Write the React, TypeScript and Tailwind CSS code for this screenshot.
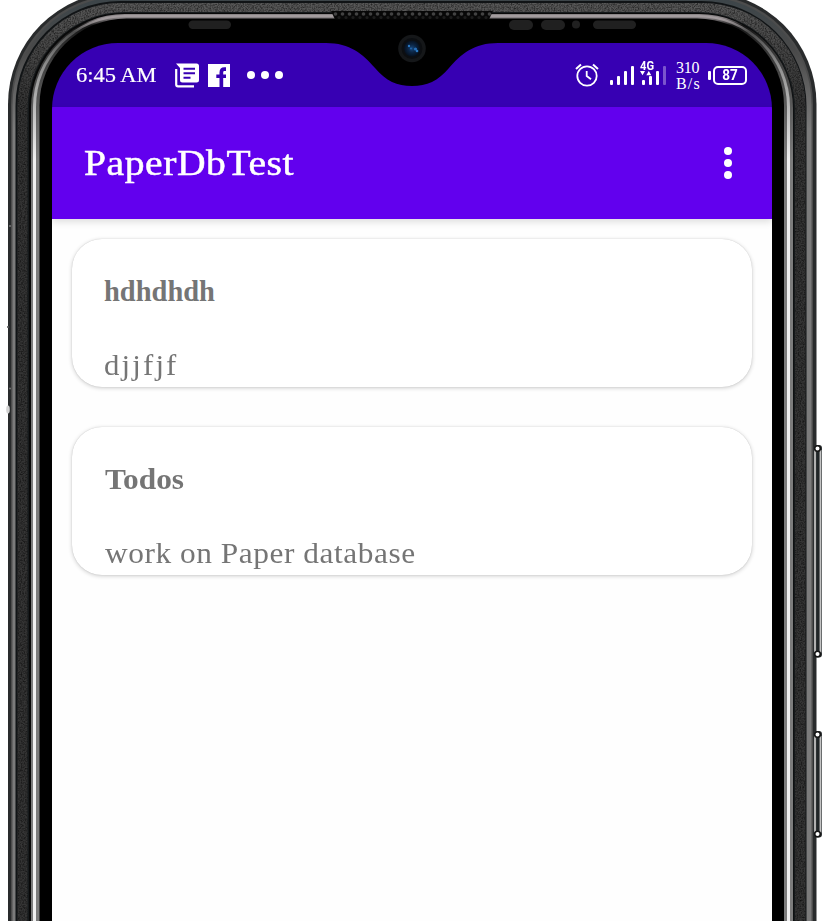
import React from "react";

function SideButton({ y, height }: { y: number; height: number }) {
  const end = y + height;
  return (
    <g>
      <rect x="813.5" y={y} width="8.5" height={height} rx="3" fill="#303436" />
      <rect x="814" y={y + 5} width="2.2" height={height - 10} fill="#b0b0b0" />
      <rect x="816.3" y={y + 3} width="3.2" height={height - 6} fill="#202527" />
      <rect x="819.6" y={y + 5} width="1.8" height={height - 10} fill="#c4c4c4" />
      <circle cx="817.5" cy={y + 3.5} r="2.8" fill="#fff" stroke="#151515" strokeWidth="1.6" />
      <circle cx="817.5" cy={end - 3.5} r="2.8" fill="#fff" stroke="#151515" strokeWidth="1.6" />
    </g>
  );
}

function PhoneFrame() {
  return (
    <svg className="absolute inset-0" width="824" height="921" viewBox="0 0 824 921" aria-hidden="true">
      <defs>
        <linearGradient id="rim" x1="0" y1="0" x2="0" y2="160" gradientUnits="userSpaceOnUse">
          <stop offset="0" stopColor="#a39c9e" />
          <stop offset="0.12" stopColor="#a39c9e" />
          <stop offset="0.2" stopColor="#4c4c4c" />
          <stop offset="0.4" stopColor="#8c8c8c" />
          <stop offset="1" stopColor="#f0f0f0" />
        </linearGradient>
        <linearGradient id="rimInner" x1="0" y1="0" x2="0" y2="160" gradientUnits="userSpaceOnUse">
          <stop offset="0.11" stopColor="#8a8587" />
          <stop offset="0.16" stopColor="#161616" />
          <stop offset="0.35" stopColor="#3c3c3c" />
          <stop offset="1" stopColor="#7c7c7c" />
        </linearGradient>
        <linearGradient id="metal" x1="0" y1="0" x2="0" y2="100" gradientUnits="userSpaceOnUse">
          <stop offset="0" stopColor="#5a5a5a" />
          <stop offset="1" stopColor="#353535" />
        </linearGradient>
        <linearGradient id="edge" x1="0" y1="0" x2="0" y2="130" gradientUnits="userSpaceOnUse">
          <stop offset="0" stopColor="#3d4549" />
          <stop offset="0.4" stopColor="#4a4a4a" />
          <stop offset="1" stopColor="#7b7b7b" />
        </linearGradient>
        <radialGradient id="lens">
          <stop offset="0" stopColor="#16477c" />
          <stop offset="0.5" stopColor="#0b2443" />
          <stop offset="1" stopColor="#06101d" />
        </radialGradient>
        <filter id="grain" x="0" y="0" width="824" height="921" filterUnits="userSpaceOnUse">
          <feTurbulence type="fractalNoise" baseFrequency="0.7" numOctaves="2" seed="4" />
          <feColorMatrix values="0 0 0 0 0  0 0 0 0 0  0 0 0 0 0  1.2 0 0 0 -0.42" />
          <feComposite in2="SourceGraphic" operator="in" />
        </filter>
        <pattern id="mesh" x="332" y="11" width="7" height="9" patternUnits="userSpaceOnUse">
          <rect width="7" height="9" fill="#080808" />
          <circle cx="3.5" cy="3" r="1.8" fill="#424242" />
          <circle cx="0" cy="6.5" r="1.5" fill="#1d1d1d" />
          <circle cx="7" cy="6.5" r="1.5" fill="#1d1d1d" />
        </pattern>
      </defs>
      <rect x="8" y="-8" width="808.5" height="1200" rx="112" fill="#292b2c" />
      <rect x="11" y="-5" width="802" height="1200" rx="109" fill="#4c4c4c" />
      <rect x="12.5" y="-3" width="799" height="1200" rx="108" fill="url(#edge)" />
      <rect x="15.5" y="1" width="791" height="1200" rx="105" fill="#111416" />
      <rect x="17.5" y="3" width="788" height="1200" rx="103" fill="url(#metal)" />
      <rect x="17.5" y="3" width="788" height="1200" rx="103" fill="#000" filter="url(#grain)" />
      <rect x="27.5" y="12" width="767.5" height="1200" rx="97" fill="#15191b" />
      <rect x="29" y="13" width="764.5" height="1200" rx="95" fill="#080808" />
      <rect x="31" y="14" width="762" height="1200" rx="94" fill="url(#rimInner)" />
      <rect x="33" y="15" width="757" height="1200" rx="92" fill="url(#rim)" />
      <rect x="36" y="17" width="751" height="1200" rx="90" fill="url(#rimInner)" />
      <rect x="39.5" y="18.5" width="744.5" height="1200" rx="87" fill="#000" />

      <path d="M331 11H493L489 19.5H335Z" fill="url(#mesh)" />
      <rect x="188.5" y="20.5" width="42.5" height="8.5" rx="4.2" fill="#202020" />
      <rect x="509" y="20" width="24" height="10" rx="5" fill="#202020" />
      <rect x="541" y="20" width="24" height="10" rx="5" fill="#202020" />
      <circle cx="576" cy="24.5" r="4" fill="#202020" />
      <rect x="593" y="20.5" width="43" height="8.5" rx="4.2" fill="#202020" />

      <ellipse cx="8" cy="409.5" rx="1.8" ry="4" fill="#d2d2d2" />
      <circle cx="10" cy="388.5" r="1" fill="#777" />
      <circle cx="10" cy="226" r="1" fill="#777" />
      <rect x="7" y="326" width="1.5" height="2" fill="#777" />
      <SideButton y={445} height={212.5} />
      <SideButton y={731} height={106.5} />
    </svg>
  );
}

function CameraNotch() {
  return (
    <svg className="absolute left-[270px] top-[-43px]" width="180" height="88" viewBox="322 0 180 88" aria-hidden="true">
      <path
        d="M326 42V43C350 43 363 54 375 68C386 81 397 86 412 86C427 86 438 81 449 68C461 54 474 43 498 43V42Z"
        fill="#000"
      />
      <circle cx="412" cy="48.5" r="13.8" fill="#151719" />
      <circle cx="412" cy="48.5" r="10.5" fill="#0c0e11" />
      <circle cx="412" cy="48.5" r="8" fill="url(#lens)" />
      <circle cx="409" cy="46" r="1.2" fill="#2c79c4" />
      <circle cx="415.5" cy="49" r="1.6" fill="#266eb8" />
      <circle cx="417" cy="51" r="1.3" fill="#2b79c2" />
      <circle cx="411" cy="48.5" r="1" fill="#2465ab" />
    </svg>
  );
}

function NewsIcon() {
  return (
    <svg width="24" height="25" viewBox="0 0 24 25" aria-hidden="true">
      <path d="M1.2 6V21.5Q1.2 23.3 3 23.3H19" fill="none" stroke="#fff" strokeWidth="2.2" />
      <path d="M1 0.5H21.5Q24 0.5 24 3V17Q24 19.5 21.5 19.5H7.5Q5 19.5 5 17V5Z" fill="#fff" />
      <path d="M8.5 5.7H20M8.5 10.3H20M8.5 14.7H15.5" stroke="#3700b3" strokeWidth="1.9" />
    </svg>
  );
}

function FacebookIcon() {
  return (
    <svg className="ml-[9px]" width="22" height="23" viewBox="0 0 22 23" aria-hidden="true">
      <rect width="22" height="23" fill="#fff" />
      <path
        d="M11.5 23V14H8.3V10.5H11.5V8.5C11.5 5 13.3 3.3 16.3 3.3H18V7H16.7C15.5 7 15.2 7.5 15.2 8.5V10.5H18V14H15.2V23Z"
        fill="#3700b3"
      />
    </svg>
  );
}

function AlarmIcon() {
  return (
    <svg width="24" height="24" viewBox="0 0 24 24" fill="none" stroke="#fff" aria-hidden="true">
      <circle cx="12" cy="13" r="9.7" strokeWidth="1.8" />
      <path d="M11.7 8V13L16 16.3" strokeWidth="1.8" />
      <path d="M1 6L6 1.5M18 1.5L23 6" strokeWidth="2" />
    </svg>
  );
}

function SignalBars() {
  return (
    <div className="ml-[11px] flex h-[19px] items-end gap-1">
      <div className="h-[5px] w-[3px] rounded-[1px] bg-white" />
      <div className="h-[9px] w-[3px] rounded-[1px] bg-white" />
      <div className="h-[14px] w-[3px] rounded-[1px] bg-white" />
      <div className="h-[19px] w-[3px] rounded-[1px] bg-white" />
    </div>
  );
}

function MobileDataSignal() {
  return (
    <div className="relative ml-[5px] flex h-[19px] w-[27px] items-end gap-1 pl-[3px]">
      <div className="h-[5px] w-[3px] rounded-[1px] bg-white" />
      <div className="h-[9px] w-[3px] rounded-[1px] bg-white" />
      <div className="h-[14px] w-[3px] rounded-[1px] bg-white" />
      <div className="h-[19px] w-[3px] rounded-[1px] bg-[#7b55cd]" />
      <span className="absolute left-px top-[-6px] origin-left scale-x-[0.86] font-['Roboto','Liberation_Sans',sans-serif] text-[13px] font-bold leading-[12px]">4G</span>
      <svg className="absolute left-px top-[5px]" width="12" height="5" viewBox="0 0 12 5" fill="#fff" aria-hidden="true">
        <path d="M0 0H5L2.5 4.2ZM6.3 4.2H11.3L8.8 0Z" />
      </svg>
    </div>
  );
}

function StatusBar() {
  return (
    <div className="flex h-16 items-center bg-[#3700b3] pl-6 pr-[25px] text-white">
      <div className="w-[99px] whitespace-nowrap text-[21px] leading-[24px]">
        <span className="inline-block origin-left scale-x-[1.07] [-webkit-text-stroke:0.2px_white]">6:45 AM</span>
      </div>
      <NewsIcon />
      <FacebookIcon />
      <div className="ml-[17px] flex gap-[6px]">
        <div className="size-2 rounded-full bg-white" />
        <div className="size-2 rounded-full bg-white" />
        <div className="size-2 rounded-full bg-white" />
      </div>
      <div className="ml-auto flex items-center">
        <AlarmIcon />
        <SignalBars />
        <MobileDataSignal />
        <div className="ml-[10px] w-8 pt-px text-[16px] leading-[16px]">
          <div className="tracking-[-0.2px]">310</div>
          <div className="tracking-[1.2px]">B/s</div>
        </div>
        <div className="h-[9px] w-[3px] rounded-[1px] bg-white" />
        <div className="ml-[2px] flex h-[19px] w-[34px] items-center justify-center rounded-[5px] border-2 border-white font-['Roboto','Liberation_Sans',sans-serif] text-[15.5px] font-bold leading-none">
          <span className="inline-block scale-x-[0.87] pt-px">87</span>
        </div>
      </div>
    </div>
  );
}

function AppBar() {
  return (
    <header className="relative flex h-28 items-center justify-between bg-[#6200ee] pl-8 pr-10 text-white shadow-[0_3px_7px_rgba(0,0,0,0.13)]">
      <h1 className="origin-left scale-x-[1.1] pb-px text-[36px] font-normal leading-[40px] tracking-[0.5px] [-webkit-text-stroke:0.5px_white]">
        PaperDbTest
      </h1>
      <button aria-label="More options" className="flex flex-col gap-1">
        <span className="size-2 rounded-full bg-white" />
        <span className="size-2 rounded-full bg-white" />
        <span className="size-2 rounded-full bg-white" />
      </button>
    </header>
  );
}

function NoteCard({
  title,
  body,
  titleClass,
  bodyClass,
}: {
  title: string;
  body: string;
  titleClass: string;
  bodyClass: string;
}) {
  return (
    <article className="flex h-[148px] flex-col items-start rounded-[30px] bg-white pl-8 pt-[35px] text-[28.5px] leading-[36px] text-[#757575] shadow-[0_1px_4px_rgba(0,0,0,0.2),0_0_1px_rgba(0,0,0,0.2)]">
      <h2 className={titleClass}>{title}</h2>
      <p className={bodyClass}>{body}</p>
    </article>
  );
}

export default function App() {
  return (
    <main className="relative h-[921px] w-[824px] overflow-hidden bg-white pl-[52px] pt-[43px] font-['Liberation_Serif',serif]">
      <PhoneFrame />
      <div className="relative h-[878px] w-[720px]">
        <div className="flex h-full flex-col overflow-hidden rounded-t-[66px]">
          <StatusBar />
          <AppBar />
          <div className="flex flex-1 flex-col gap-10 bg-[#fefefe] px-5 pt-5">
            <NoteCard
              title="hdhdhdh"
              body="djjfjf"
              titleClass="font-bold"
              bodyClass="mt-[38px] origin-left scale-x-[1.08] tracking-[2px]"
            />
            <NoteCard
              title="Todos"
              body="work on Paper database"
              titleClass="ml-px origin-left scale-x-[1.1] font-bold"
              bodyClass="ml-px mt-[38px] origin-left scale-x-[1.1] tracking-[0.5px]"
            />
          </div>
        </div>
        <CameraNotch />
      </div>
    </main>
  );
}
